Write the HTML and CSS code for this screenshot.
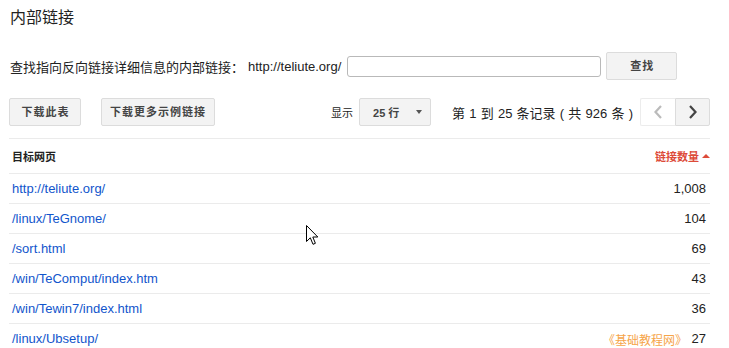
FILE: index.html
```html
<!DOCTYPE html>
<html lang="zh-CN">
<head>
    <meta charset="UTF-8">
    <title>内部链接</title>
    <link rel="stylesheet" href="styles.css">
</head>
<body>
    <div id="page">
        <h1 class="page-title">内部链接</h1>

        <div class="search-row">
            <span class="search-label">查找指向反向链接详细信息的内部链接：</span>
            <span class="search-domain">http://teliute.org/</span>
            <input class="search-input" type="text">
            <button class="btn btn-search">查找</button>
        </div>

        <div class="toolbar">
            <button class="btn btn-wide">下载此表</button>
            <button class="btn btn-more">下载更多示例链接</button>
            <div class="pager-group">
                <span class="show-label">显示</span>
                <div class="select">
                    <span>25 行</span>
                    <span class="select-arrow"></span>
                </div>
                <span class="record-info">第 1 到 25 条记录 ( 共 926 条 )</span>
                <div class="pager">
                    <button class="pager-btn prev">
                        <svg width="10" height="14" viewBox="0 0 10 14"><path d="M8 1 L2.5 7 L8 13" fill="none" stroke="#bbb" stroke-width="2.2"/></svg>
                    </button>
                    <button class="pager-btn next">
                        <svg width="10" height="14" viewBox="0 0 10 14"><path d="M2 1 L7.5 7 L2 13" fill="none" stroke="#444" stroke-width="2.2"/></svg>
                    </button>
                </div>
            </div>
        </div>

        <div class="grid">
            <div class="grid-head">
                <span class="col-url">目标网页</span>
                <span class="col-count sorted">链接数量 <span class="sort-arrow"></span></span>
            </div>
            <div id="rows"></div>
        </div>
    </div>

    <svg class="cursor" width="13" height="21" viewBox="0 0 13 21">
        <path d="M0.5 0.5 L0.5 16.5 L4.3 12.8 L7 19.3 L9.4 18.3 L6.8 12 L11.8 12 Z" fill="#fff" stroke="#000" stroke-width="1"/>
    </svg>
    <div class="watermark">《基础教程网》</div>

    <script>
        const links = [
            ['http://teliute.org/', '1,008'],
            ['/linux/TeGnome/', '104'],
            ['/sort.html', '69'],
            ['/win/TeComput/index.htm', '43'],
            ['/win/Tewin7/index.html', '36'],
            ['/linux/Ubsetup/', '27']
        ];

        const rows = document.getElementById('rows');
        links.forEach(([url, count]) => {
            const row = document.createElement('div');
            row.className = 'grid-row';
            row.innerHTML = '<a class="col-url" href="#">' + url + '</a><span class="col-count">' + count + '</span>';
            rows.appendChild(row);
        });
    </script>
</body>
</html>
```

FILE: styles.css
```css
body {
    margin: 0;
    font-family: "Liberation Sans", "Noto Sans CJK SC", sans-serif;
    color: #222;
    background: #fff;
    overflow: hidden;
}

#page {
    padding: 8px 19px 0 9px;
}

.page-title {
    margin: 0 0 24px 1px;
    font-size: 16px;
    line-height: 20px;
    font-weight: normal;
    color: #222;
}

.search-row {
    display: flex;
    align-items: center;
    height: 28px;
    padding-left: 1px;
    font-size: 13px;
}

.search-domain {
    margin-left: 4px;
}

.search-input {
    width: 254px;
    height: 21px;
    box-sizing: border-box;
    margin: 0 0 0 6px;
    border: 1px solid #b9b9b9;
    border-radius: 3px;
    padding: 0 4px;
}

.btn {
    height: 28px;
    box-sizing: border-box;
    padding: 0 9px 0 10px;
    background: #f3f3f3;
    border: 1px solid #dcdcdc;
    border-radius: 2px;
    font-family: "Liberation Sans", "Noto Sans CJK SC", sans-serif;
    font-size: 11px;
    font-weight: bold;
    letter-spacing: 1px;
    color: #444;
    line-height: 26px;
}

.btn-search {
    width: 71px;
    margin-left: 5px;
}

.btn-wide {
    width: 72px;
}

.btn-more {
    width: 114px;
    padding: 0;
}

.toolbar {
    display: flex;
    align-items: center;
    gap: 20px;
    margin-top: 18px;
    height: 28px;
}

.pager-group {
    margin-left: auto;
    display: flex;
    align-items: center;
}

.show-label {
    font-size: 11px;
    color: #222;
    margin-right: 6px;
}

.select {
    width: 72px;
    height: 28px;
    box-sizing: border-box;
    display: flex;
    align-items: center;
    padding: 0 8px 0 13px;
    background: #f3f3f3;
    border: 1px solid #dcdcdc;
    border-radius: 2px;
    font-size: 11px;
    font-weight: bold;
    color: #444;
}

.select-arrow {
    margin-left: auto;
    border-left: 3.5px solid transparent;
    border-right: 3.5px solid transparent;
    border-top: 4px solid #555;
}

.record-info {
    font-size: 13px;
    word-spacing: 0.6px;
    margin-left: 21px;
    margin-right: 7px;
    color: #222;
}

.pager {
    display: flex;
}

.pager-btn {
    width: 35px;
    height: 28px;
    box-sizing: border-box;
    display: flex;
    align-items: center;
    justify-content: center;
    padding: 0;
    border-radius: 2px;
}

.pager-btn.prev {
    background: #fff;
    border: 1px solid #ececec;
    border-right: none;
    border-radius: 2px 0 0 2px;
}

.pager-btn.next {
    background: #f3f3f3;
    border: 1px solid #dcdcdc;
    border-radius: 0 2px 2px 0;
}

.grid {
    margin-top: 12px;
    border-top: 1px solid #ebebeb;
}

.grid-head,
.grid-row {
    display: flex;
    justify-content: space-between;
    align-items: center;
    border-bottom: 1px solid #ebebeb;
    padding: 0 4px 0 3px;
}

.grid-head {
    height: 34px;
    font-size: 11px;
    font-weight: bold;
    padding-right: 0;
}

.grid-row {
    height: 29px;
    font-size: 13px;
}

.grid-row a {
    color: #15c;
    text-decoration: none;
}

.sorted {
    color: #dd4b39;
    display: flex;
    align-items: center;
}

.sort-arrow {
    margin-left: 3px;
    border-left: 4px solid transparent;
    border-right: 4px solid transparent;
    border-bottom: 4px solid #dd4b39;
}

.cursor {
    position: absolute;
    left: 306px;
    top: 225px;
}

.watermark {
    position: absolute;
    left: 603px;
    top: 332px;
    font-family: "Noto Sans CJK SC", sans-serif;
    font-size: 12px;
    line-height: 16px;
    color: #f6a54a;
}
```
